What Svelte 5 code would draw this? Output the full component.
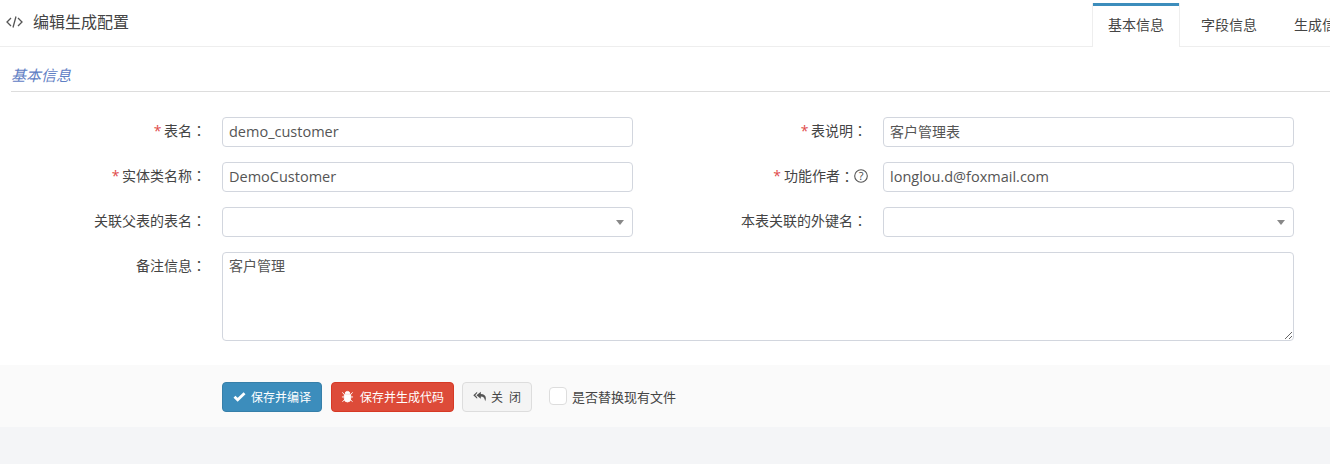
<script>
  const colon = '：';
</script>

<div class="page">
  <header class="bar">
    <div class="title">
      <svg class="code" viewBox="0 0 17 12" width="17" height="12"><path d="M5 2 L1 6 L5 10 M12 2 L16 6 L12 10 M10 0.5 L7 11.5" fill="none" stroke="#555" stroke-width="1.3"/></svg>
      <span>编辑生成配置</span>
    </div>
    <nav class="tabs">
      <span class="tab active">基本信息</span>
      <span class="tab">字段信息</span>
      <span class="tab">生成信息</span>
    </nav>
  </header>

  <section class="body">
    <h4 class="section">基本信息</h4>
    <form class="form" onsubmit={(e) => e.preventDefault()}>
      <label class="lbl"><i>*</i> 表名<span class="colon">{colon}</span></label>
      <input class="ctl" value="demo_customer" />
      <label class="lbl"><i>*</i> 表说明<span class="colon">{colon}</span></label>
      <input class="ctl cjk" value="客户管理表" />

      <label class="lbl"><i>*</i> 实体类名称<span class="colon">{colon}</span></label>
      <input class="ctl" value="DemoCustomer" />
      <label class="lbl help"><i>*</i> 功能作者<span class="colon">{colon}</span><svg viewBox="0 0 14 14" width="14" height="14"><circle cx="7" cy="7" r="6.3" fill="none" stroke="#555" stroke-width="1.1"/><text x="7" y="10.8" text-anchor="middle" class="q">?</text></svg></label>
      <input class="ctl" value="longlou.d@foxmail.com" />

      <label class="lbl">关联父表的表名<span class="colon">{colon}</span></label>
      <div class="ctl select"><b></b></div>
      <label class="lbl">本表关联的外键名<span class="colon">{colon}</span></label>
      <div class="ctl select"><b></b></div>

      <label class="lbl">备注信息<span class="colon">{colon}</span></label>
      <textarea class="ctl area" value="客户管理"></textarea>
    </form>
  </section>

  <footer class="actions">
    <button class="btn blue">
      <svg viewBox="0 0 14 12" width="13" height="11"><path d="M1.5 6.3 L5 9.6 L12.5 2.4" fill="none" stroke="#fff" stroke-width="3"/></svg>
      <span>保存并编译</span>
    </button>
    <button class="btn red">
      <svg viewBox="0 0 14 14" width="13" height="13"><path d="M4.5 4 A2.5 2.5 0 0 1 9.5 4 Z M3.6 5 H10.4 V9.5 A3.4 3.4 0 0 1 3.6 9.5 Z M1.5 2.5 L3.6 5 M12.5 2.5 L10.4 5 M1 7.5 H3.6 M13 7.5 H10.4 M1.5 12.5 L4 10.5 M12.5 12.5 L10 10.5" fill="#fff" stroke="#fff" stroke-width="1"/></svg>
      <span>保存并生成代码</span>
    </button>
    <button class="btn plain">
      <svg viewBox="0 0 16 12" width="14" height="11"><path d="M4.8 0.5 L0.3 4.5 L4.8 8.5 V7 L2.6 4.5 L4.8 2 Z M9 0.5 L4 4.5 L9 8.5 V6 C12 6 13.4 7.6 14 11.5 C16.2 6.5 14 3 9 3 Z" fill="#555"/></svg>
      <span class="spaced">关 闭</span>
    </button>
    <label class="check"><span class="box"></span>是否替换现有文件</label>
  </footer>
</div>

<style>
  :global(body) {
    margin: 0;
    background: #f4f5f7;
  }
  .page {
    font-family: "Open Sans", "Noto Sans CJK SC", sans-serif;
    font-size: 14px;
    color: #444;
    height: 464px;
    overflow: hidden;
  }
  .bar {
    height: 47px;
    box-sizing: border-box;
    background: #fff;
    border-bottom: 1px solid #eee;
    display: flex;
    justify-content: space-between;
    padding-left: 6px;
  }
  .title {
    display: flex;
    align-items: center;
    gap: 10px;
    font-size: 16px;
    color: #444;
    height: 44px;
    line-height: 20px;
  }
  .tabs {
    display: flex;
    gap: 5px;
    padding-top: 3px;
    width: 238px;
    overflow: hidden;
    flex: none;
    height: 47px;
    box-sizing: border-box;
  }
  .tab {
    flex: none;
    box-sizing: border-box;
    width: 88px;
    height: 44px;
    padding: 3px 16px 0;
    line-height: 38px;
    text-align: center;
    font-size: 14px;
    color: #444;
    white-space: nowrap;
  }
  .tab.active {
    padding: 3px 15px 0;
    border-left: 1px solid #eee;
    border-right: 1px solid #eee;
    background: #fff;
    box-shadow: inset 0 3px 0 #3c8dbc;
  }
  .body {
    background: #fff;
    height: 318px;
    padding: 0 0 0 11px;
    box-sizing: border-box;
  }
  .section {
    margin: 0;
    box-sizing: border-box;
    border-bottom: 1px solid #ddd;
    font-size: 15px;
    font-weight: 400;
    font-style: italic;
    color: #5f80c4;
    line-height: 56px;
    height: 45px;
    overflow: hidden;
  }
  .form {
    display: grid;
    grid-template-columns: 211px 411px 250px 411px;
    grid-auto-rows: 30px 30px 30px 89px;
    row-gap: 15px;
    margin: 25px 0 0;
  }
  .lbl {
    text-align: right;
    padding-right: 16px;
    line-height: 26px;
    color: #444;
    white-space: nowrap;
  }
  .colon {
    font-family: "Noto Sans CJK TC", sans-serif;
  }
  .lbl i {
    color: #e04b4b;
    font-style: normal;
    font-size: 14px;
    margin-right: -1px;
  }
  .help {
    padding-right: 15px;
    display: flex;
    justify-content: flex-end;
    align-items: center;
    height: 27px;
  }
  .lbl.help i { margin-right: 3px; }
  .q {
    font-size: 11px;
    fill: #444;
    font-family: "Open Sans", sans-serif;
  }
  .ctl {
    box-sizing: border-box;
    width: 411px;
    height: 30px;
    border: 1px solid #d2d6de;
    border-radius: 4px;
    padding: 0 6px 2px;
    background: #fff;
    font-family: "Open Sans", "Noto Sans CJK SC", sans-serif;
    font-size: 14.5px;
    color: #555;
    margin: 0;
    outline: none;
  }
  .cjk {
    font-size: 14px;
  }
  .select {
    position: relative;
  }
  .select b {
    position: absolute;
    right: 8px;
    top: 12px;
    border-top: 5px solid #888;
    border-left: 4px solid transparent;
    border-right: 4px solid transparent;
  }
  .area {
    grid-column: 2 / 5;
    width: 1072px;
    height: 89px;
    padding: 4px 6px;
    font-size: 14px;
    line-height: 18px;
    resize: vertical;
  }
  .actions {
    height: 62px;
    background: #fafafa;
    display: flex;
    align-items: center;
    padding: 0 0 0 222px;
    gap: 8px;
    box-sizing: border-box;
  }
  .btn {
    height: 30px;
    box-sizing: border-box;
    border-radius: 4px;
    border: 1px solid;
    font-family: inherit;
    font-size: 12px;
    padding: 0 10px;
    display: inline-flex;
    align-items: center;
    gap: 5px;
    margin-top: 1px;
    white-space: nowrap;
  }
  .blue {
    background: #3c8dbc;
    border-color: #367fa9;
    color: #fff;
    width: 100px;
    margin-right: 1px;
  }
  .red {
    background: #dd4b39;
    border-color: #d73925;
    color: #fff;
    width: 123px;
    padding: 0 9px;
    gap: 6px;
  }
  .plain {
    background: #f4f4f4;
    border-color: #ddd;
    color: #444;
    width: 70px;
    padding: 0 10px;
    gap: 4px;
  }
  .spaced {
    word-spacing: 3px;
  }
  .check {
    display: inline-flex;
    align-items: center;
    margin-left: 9px;
    color: #444;
    font-size: 13px;
    gap: 5px;
  }
  .box {
    width: 16px;
    height: 16px;
    border: 1px solid #ddd;
    border-radius: 4px;
    background: #fff;
  }
</style>
